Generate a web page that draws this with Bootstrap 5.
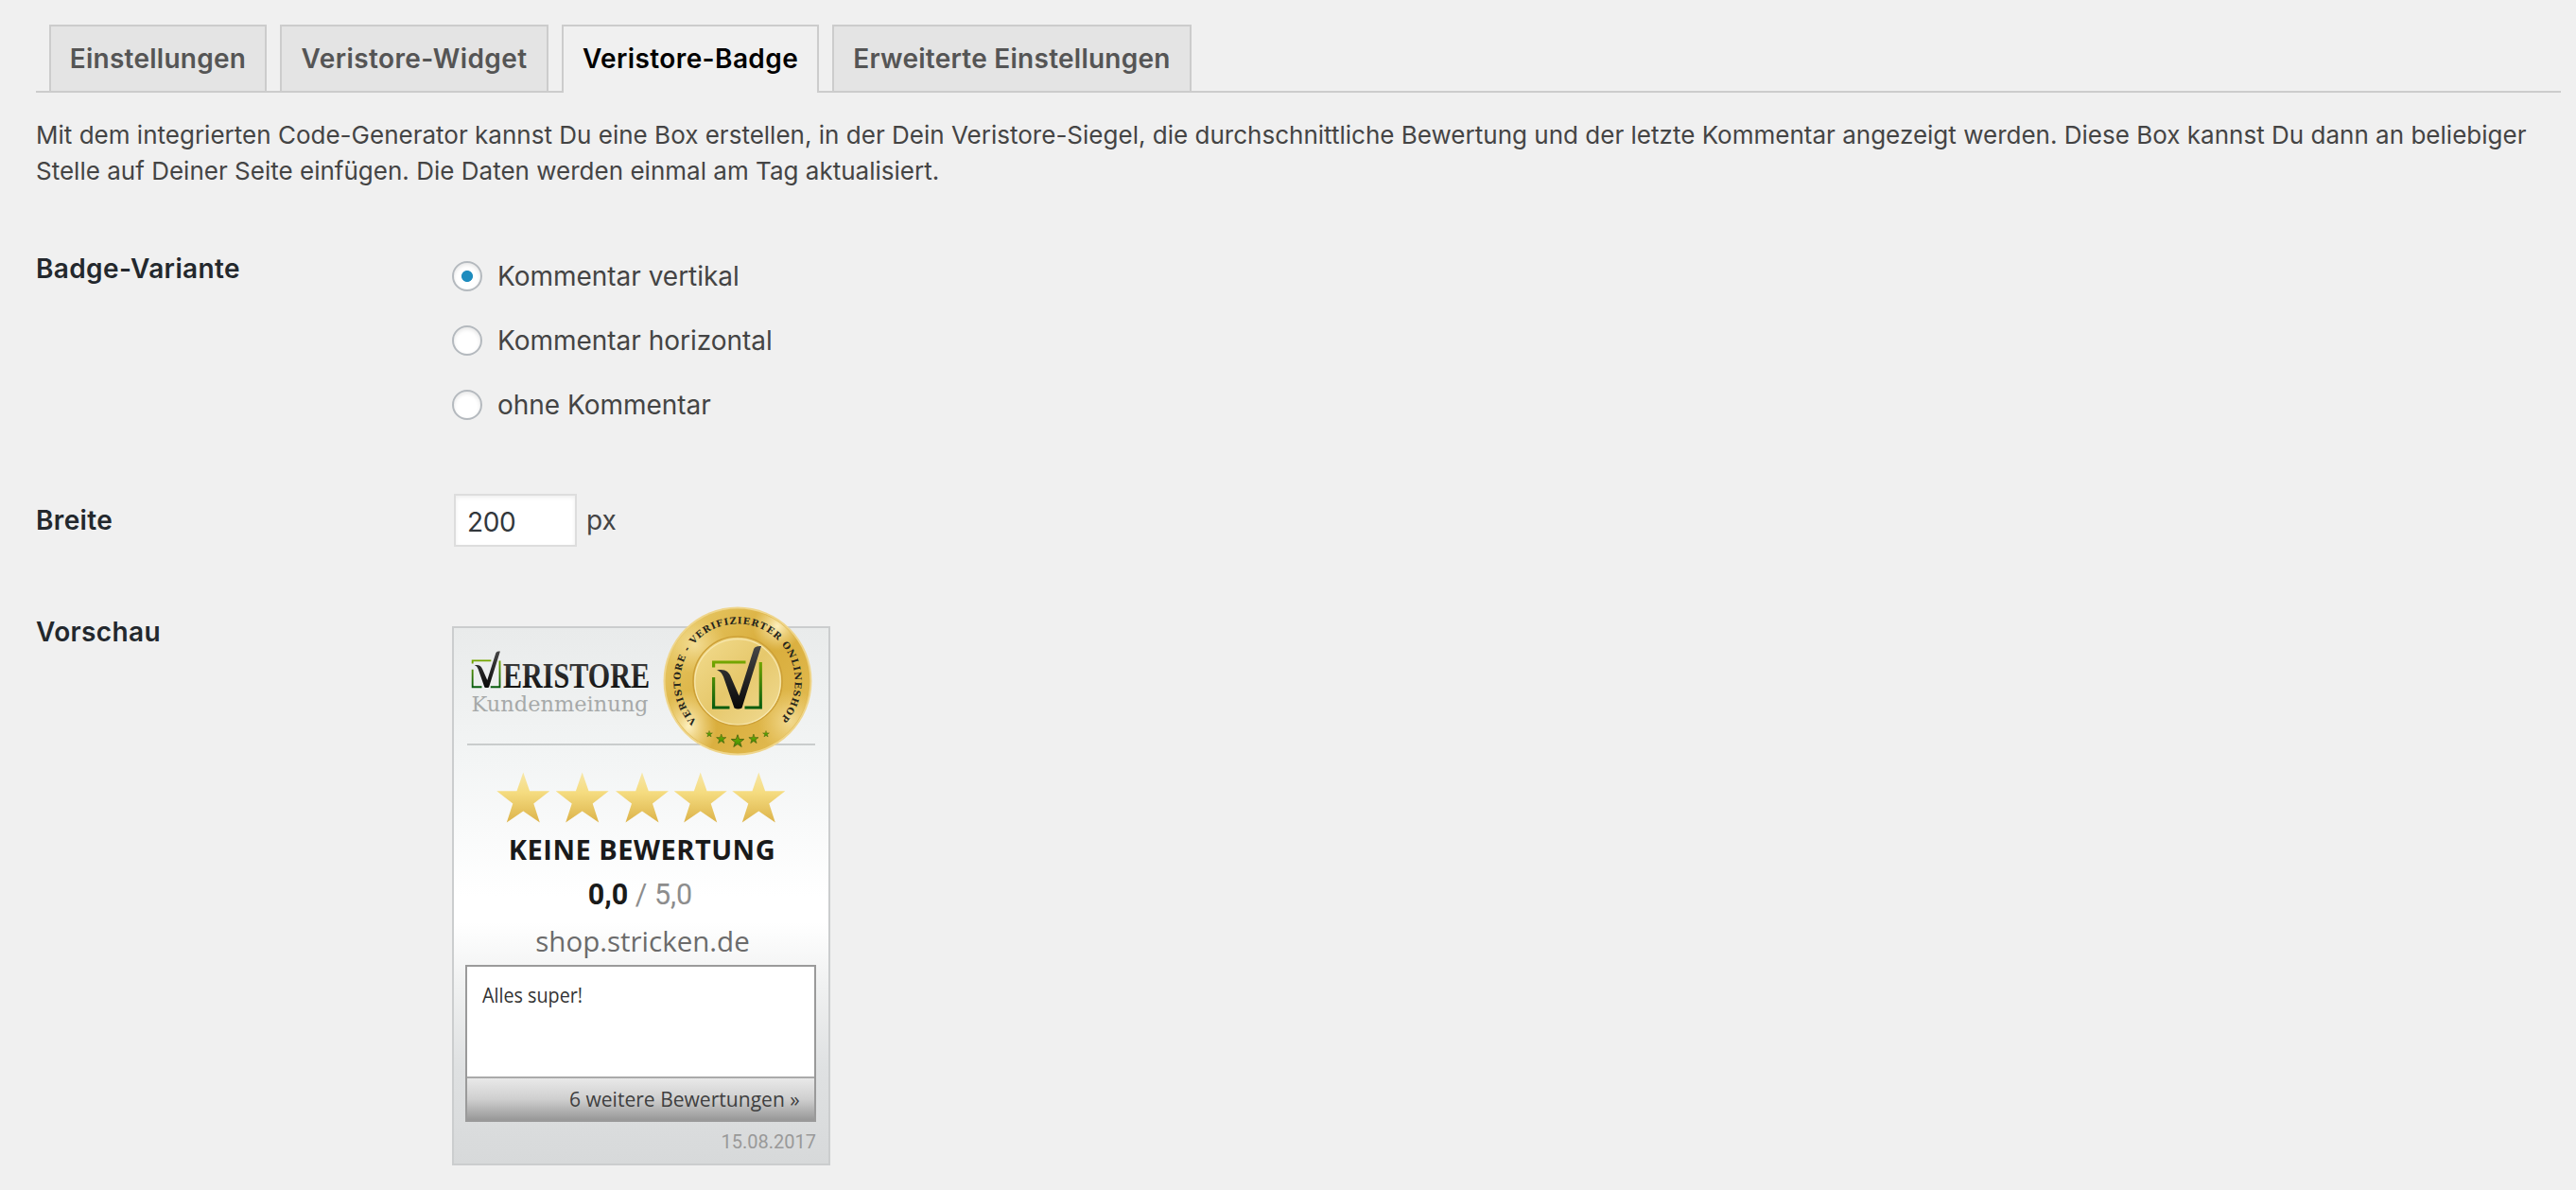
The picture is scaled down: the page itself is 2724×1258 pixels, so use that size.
<!DOCTYPE html>
<html lang="de">
<head>
<meta charset="utf-8">
<meta name="viewport" content="width=device-width, initial-scale=1">
<title>Veristore-Badge</title>
<link href="https://cdn.jsdelivr.net/npm/bootstrap@5.3.0/dist/css/bootstrap.min.css" rel="stylesheet">
<style>
body{background:#f0f0f0;color:#444;font-family:Inter,sans-serif;font-size:28px;line-height:36px}
.settings-wrap{padding:26px 16px 0 38px}
.settings-tabs{--bs-nav-tabs-border-width:0;border-bottom:2px solid #ccc;padding-left:14px;gap:14px;height:72px}
.settings-tabs .nav-link{height:70px;padding:0;text-align:center;line-height:68px;border:2px solid #ccc;border-bottom:0;border-radius:0;background:#e4e4e4;color:#555;font-weight:600;letter-spacing:.25px;margin:0}
.settings-tabs .nav-link.active{height:72px;background:#f0f0f0;color:#000;border-color:#ccc}
.tab-a{width:230px}.tab-b{width:284px}.tab-c{width:272px}.tab-d{width:380px}
.tab-b,.tab-c{letter-spacing:.4px!important}
.intro{font-size:26px;line-height:38px;margin:26px 0 26px;letter-spacing:.01px}
.field-label{width:440px;padding-top:40px;color:#23282d;font-weight:600;letter-spacing:.37px}
.row-variant{height:266px}.row-width{height:118px}
.radios{padding-top:32px}
.radios label{height:68px;gap:16px;letter-spacing:-.02px}
.radios .form-check-input{width:32px;height:32px;margin:0;border:2px solid #b4b9be;background:#fff;box-shadow:inset 0 2px 4px rgba(0,0,0,.1)}
.radios .form-check-input:checked{background:radial-gradient(circle,#1e8cbe 5.6px,#fff 6.4px)}
.width-field{padding:30px 0 0 2px;gap:10px}
.width-field .form-control{width:130px;height:56px;padding:4px 12px 0;border:2px solid #ddd;border-radius:0;box-shadow:inset 0 2px 4px rgba(0,0,0,.07);font-size:28px;color:#32373c;letter-spacing:-.4px}
.preview{padding-top:52px}
.seal-card{width:400px;height:570px;border:2px solid #cbcdce;padding:0 13px;background:linear-gradient(#e9ebeb 0,#f3f5f5 25%,#fff 50%,#fff 55%,#f1f2f2 66%,#dfe1e2 82%,#d7d9da 100%);font-family:'Open Sans',sans-serif}
.card-head{height:124px;border-bottom:2px solid #c9cccc;margin:0 1px;padding:18px 0 0 2px}
.seal{top:-24px;left:220px}
.rating-stars{height:86px;padding:26px 0 0 30px}
.verdict{font-weight:700;font-size:29px;line-height:48px;color:#1a1a1a;letter-spacing:.5px;padding-left:2px}
.score{font-family:Roboto,sans-serif;font-size:30.5px;line-height:48px;color:#8d8d8d;padding-right:2px}
.score b{color:#1a1a1a}
.shop{font-size:29.5px;line-height:49px;color:#6b6b6b;padding-left:3px}
.review{width:371px;height:166px;border:2px solid #9a9a9a;background:#fff;color:#333;margin:1px 0 0 -1px}
.review-text{height:116px;font-size:21px;padding:12px 0 0 16px}
.narrow-l{display:inline-block;transform:scaleX(.94);transform-origin:left}
.narrow-r{display:inline-block;transform:scaleX(.957);transform-origin:right}
.review-more{height:46px;line-height:42px;border-top:2px solid #aaa;background:linear-gradient(#e9e9e9,#cfcfcf 50%,#989898);font-size:22px;padding-right:15px;color:#3f3f3f}
.stamp{font-family:Roboto,sans-serif;font-size:20px;line-height:42px;color:#999}
</style>
</head>
<body>
<svg width="0" height="0" class="position-absolute">
  <defs>
    <linearGradient id="green" gradientUnits="userSpaceOnUse" x1="0" y1="-22" x2="0" y2="30"><stop offset="0" stop-color="#78a800"/><stop offset="1" stop-color="#03590f"/></linearGradient>
    <linearGradient id="ink" x1="0" y1="0" x2="0" y2="1"><stop offset="0" stop-color="#464646"/><stop offset="1" stop-color="#080808"/></linearGradient>
    <linearGradient id="starGold" x1="0" y1="0" x2="0" y2="1"><stop offset="0" stop-color="#f7e7a8"/><stop offset=".4" stop-color="#f5dc80"/><stop offset="1" stop-color="#dcb34a"/></linearGradient>
    <linearGradient id="starSmall" x1="0" y1="0" x2="0" y2="1"><stop offset="0" stop-color="#79b500"/><stop offset="1" stop-color="#398a05"/></linearGradient>
    <polygon id="star" points="0,-29 6.8,-9.3 28,-9.3 11,4 17.5,24 0,12 -17.5,24 -11,4 -28,-9.3 -6.8,-9.3"/>
    <g id="tick">
      <path d="M-25.4-14.5V-20H8.5M-25.4-4V28H-8.5M7.5 28H24.3V-20" fill="none" stroke="url(#green)" stroke-width="3.2"/>
      <path d="M-22-11.5C-13-13-9.500-10-7-4L1.500 15.500 17-33.500C18-36.500 21-37 25-37L4.500 28.500Q.5 30.500-3.500 28.500L-15-4.500C-17-9-18.500-10.300-22-11.500Z" fill="url(#ink)"/>
    </g>
  </defs>
</svg>
<main class="settings-wrap">
  <ul class="nav nav-tabs settings-tabs flex-nowrap">
    <li class="nav-item"><a class="nav-link tab-a" href="#">Einstellungen</a></li>
    <li class="nav-item"><a class="nav-link tab-b" href="#">Veristore-Widget</a></li>
    <li class="nav-item"><a class="nav-link tab-c active" href="#">Veristore-Badge</a></li>
    <li class="nav-item"><a class="nav-link tab-d" href="#">Erweiterte Einstellungen</a></li>
  </ul>
  <p class="intro">Mit dem integrierten Code-Generator kannst Du eine Box erstellen, in der Dein Veristore-Siegel, die durchschnittliche Bewertung und der letzte Kommentar angezeigt werden. Diese Box kannst Du dann an beliebiger<br>Stelle auf Deiner Seite einfügen. Die Daten werden einmal am Tag aktualisiert.</p>
  <form>
    <div class="d-flex row-variant">
      <div class="field-label">Badge-Variante</div>
      <div class="radios d-flex flex-column">
        <label class="d-flex align-items-center"><input class="form-check-input" type="radio" name="variant" checked>Kommentar vertikal</label>
        <label class="d-flex align-items-center"><input class="form-check-input" type="radio" name="variant">Kommentar horizontal</label>
        <label class="d-flex align-items-center"><input class="form-check-input" type="radio" name="variant">ohne Kommentar</label>
      </div>
    </div>
    <div class="d-flex row-width">
      <label class="field-label" for="width">Breite</label>
      <div class="width-field d-flex align-items-center align-self-start"><input id="width" class="form-control" type="text" value="200"><span>px</span></div>
    </div>
    <div class="d-flex">
      <div class="field-label">Vorschau</div>
      <div class="preview">
        <div class="seal-card position-relative">
          <div class="card-head">
            <svg class="d-block" width="260" height="84" viewBox="496 682 260 84">
              <use href="#tick" transform="translate(514.4 710) scale(.58)"/>
              <text x="532" y="726.500" font-family="Liberation Serif" font-weight="700" font-size="37" textLength="155" lengthAdjust="spacingAndGlyphs" fill="url(#ink)">ERISTORE</text>
              <text x="498.500" y="752" font-family="DejaVu Serif" font-size="23" textLength="187" lengthAdjust="spacingAndGlyphs" fill="#a6a9a9">Kundenmeinung</text>
            </svg>
          </div>
          <svg class="seal position-absolute" width="160" height="160" viewBox="-80 -80 160 160">
            <defs>
              <linearGradient id="rim" x1="0" y1=".1" x2="1" y2=".9"><stop offset="0" stop-color="#e9cb6a"/><stop offset=".5" stop-color="#d8ac3a"/><stop offset="1" stop-color="#e3bd55"/></linearGradient>
              <linearGradient id="disc" x1="0" y1="0" x2="1" y2="1"><stop offset="0" stop-color="#f3dd90"/><stop offset=".5" stop-color="#e6c86c"/><stop offset="1" stop-color="#f1dc95"/></linearGradient>
              <radialGradient id="glow"><stop offset="0" stop-color="#fff3c4" stop-opacity=".95"/><stop offset="1" stop-color="#fbe6a0" stop-opacity="0"/></radialGradient>
              <clipPath id="round"><circle r="76"/></clipPath>
              <path id="ring" d="M-43.200 42.500A60.600 60.600 0 1 1 43.200 42.500"/>
            </defs>
            <circle r="78.500" fill="#efd58a"/>
            <circle r="76.500" fill="url(#rim)"/>
            <g clip-path="url(#round)">
              <ellipse cx="-52" cy="48" rx="30" ry="38" fill="url(#glow)"/>
              <ellipse cx="-45" cy="-38" rx="34" ry="30" fill="url(#glow)" opacity=".6"/>
              <ellipse cx="42" cy="-58" rx="26" ry="26" fill="url(#glow)"/>
              <ellipse cx="55" cy="42" rx="34" ry="34" fill="url(#glow)" opacity=".6"/>
            </g>
            <circle r="47" fill="url(#disc)" stroke="#cda037" stroke-width="1.600"/>
            <circle r="45.200" cy=".8" fill="none" stroke="#f7e7ae" stroke-width="1.200"/>
            <use href="#tick"/>
            <text font-family="DejaVu Serif" font-weight="700" font-size="9.800" fill="#25251c"><textPath href="#ring" textLength="281" lengthAdjust="spacing">VERISTORE - VERIFIZIERTER ONLINESHOP</textPath></text>
            <g fill="url(#starSmall)" stroke="#4f6712" stroke-width="4">
              <use href="#star" transform="translate(-30 56) scale(.12)"/>
              <use href="#star" transform="translate(-17.300 61.300) scale(.18)"/>
              <use href="#star" transform="translate(0 63.700) scale(.24)"/>
              <use href="#star" transform="translate(16.900 61.300) scale(.18)"/>
              <use href="#star" transform="translate(30 56) scale(.12)"/>
            </g>
          </svg>
          <div class="rating-stars">
            <svg class="d-block" width="310" height="57" viewBox="523 814 310 57" fill="url(#starGold)">
              <use href="#star" x="553.300" y="845.500"/><use href="#star" x="615.700" y="845.500"/><use href="#star" x="679" y="845.500"/><use href="#star" x="740.700" y="845.500"/><use href="#star" x="802.300" y="845.500"/>
            </svg>
          </div>
          <div class="verdict text-center">KEINE BEWERTUNG</div>
          <div class="score text-center"><b>0,0</b> / 5,0</div>
          <div class="shop text-center">shop.stricken.de</div>
          <div class="review">
            <div class="review-text"><span class="narrow-l">Alles super!</span></div>
            <div class="review-more text-end"><span class="narrow-r">6 weitere Bewertungen »</span></div>
          </div>
          <div class="stamp text-end">15.08.2017</div>
        </div>
      </div>
    </div>
  </form>
</main>
<script src="https://cdn.jsdelivr.net/npm/bootstrap@5.3.0/dist/js/bootstrap.bundle.min.js"></script>
</body>
</html>
